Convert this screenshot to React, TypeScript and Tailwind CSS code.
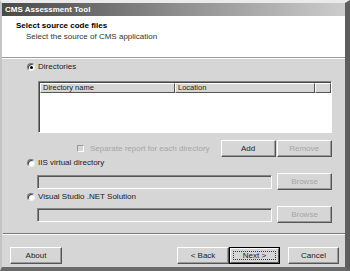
import React from "react";

const font = { fontFamily: '"Liberation Sans", Arial, sans-serif' };

function Radio({ checked, label }: { checked?: boolean; label: string }) {
  return (
    <div className="flex items-center h-[10px] ml-[25px]">
      <div className="w-[8px] h-[8px] rounded-full bg-white border border-t-[#7a7a7a] border-l-[#7a7a7a] border-r-[#f0f0f0] border-b-[#f0f0f0] shadow-[inset_1px_1px_0_#404040] flex items-center justify-center">
        {checked && <div className="w-[3px] h-[3px] rounded-full bg-black" />}
      </div>
      <span className="ml-[3px] text-[8px] leading-[10px] text-[#1a1a1a]">{label}</span>
    </div>
  );
}

function Button({
  label,
  w,
  disabled,
  focused,
  className = "",
}: {
  label: string;
  w: string;
  disabled?: boolean;
  focused?: boolean;
  className?: string;
}) {
  if (focused) {
    return (
      <div className={`${w} h-[17px] border border-black bg-[#d6d6d6] ${className}`}>
        <div className="w-full h-full border border-t-white border-l-white border-r-[#5a5a5a] border-b-[#5a5a5a] p-[2px]">
          <div className="w-full h-full border border-dotted border-[#3a3a3a] flex items-center justify-center text-[8px] text-[#222]">
            {label}
          </div>
        </div>
      </div>
    );
  }
  return (
    <div
      className={`${w} h-[17px] bg-[#d6d6d6] border border-t-white border-l-white border-r-[#555] border-b-[#555] shadow-[inset_-1px_-1px_0_#9a9a9a] flex items-center justify-center text-[8px] ${
        disabled ? "text-[#a6a6a6]" : "text-[#222]"
      } ${className}`}
    >
      {label}
    </div>
  );
}

function TextBox({ w }: { w: string }) {
  return (
    <div className={`${w} h-[14px] bg-[#d6d6d6] border border-t-[#858585] border-l-[#858585] border-r-white border-b-white shadow-[inset_1px_1px_0_#555]`} />
  );
}

export default function App() {
  return (
    <div className="w-[350px] h-[271px] bg-white" style={font}>
      <div className="w-full h-full flex flex-col bg-[#d6d6d6] border-t-[3px] border-l-[2px] border-r-[5px] border-b-[4px] border-t-[#ebebeb] border-l-[#c4c4c4] border-r-[#5e5e5e] border-b-[#6a6a6a]">
        {/* Title bar */}
        <div className="h-[13px] flex items-center pl-[3px] bg-gradient-to-r from-[#4a4a4a] via-[#8c8c8c] to-[#cdcdcd]">
          <span className="text-[8px] font-bold text-white leading-[10px]">CMS Assessment Tool</span>
        </div>
        {/* Header */}
        <div className="h-[41px] bg-white flex flex-col pt-[5px]">
          <div className="pl-[14px] text-[8px] font-bold text-black leading-[10px]">Select source code files</div>
          <div className="pl-[24px] text-[8px] text-[#333] leading-[10px] mt-[1px]">Select the source of CMS application</div>
        </div>
        <div className="h-[1px] bg-[#9a9a9a]" />
        <div className="h-[1px] bg-white" />
        {/* Body */}
        <div className="flex flex-col mt-[3px]">
          <Radio checked label="Directories" />
          {/* List view */}
          <div className="ml-[36px] mt-[9px] w-[294px] h-[52px] bg-white border border-t-[#858585] border-l-[#858585] border-r-white border-b-white shadow-[inset_1px_1px_0_#444] flex flex-col pl-[1px] pt-[1px]">
            <div className="flex h-[10px]">
              <div className="w-[135px] h-full bg-[#d6d6d6] border border-t-white border-l-white border-r-[#555] border-b-[#555] text-[7.5px] leading-[8px] pl-[2px] text-[#222]">Directory name</div>
              <div className="w-[140px] h-full bg-[#d6d6d6] border border-t-white border-l-white border-r-[#555] border-b-[#555] text-[7.5px] leading-[8px] pl-[2px] text-[#222]">Location</div>
              <div className="flex-1 h-full bg-[#d6d6d6] border border-t-white border-l-white border-r-[#555] border-b-[#555]" />
            </div>
          </div>
          {/* Checkbox + buttons */}
          <div className="flex items-center h-[17px] mt-[7px]">
            <div className="ml-[75px] w-[7px] h-[7px] border border-t-[#9a9a9a] border-l-[#9a9a9a] border-r-white border-b-white bg-[#d6d6d6]" />
            <span className="ml-[6px] text-[8px] text-[#a6a6a6]">Separate report for each directory</span>
            <Button label="Add" w="w-[55px]" className="ml-[11px]" />
            <Button label="Remove" w="w-[55px]" disabled className="ml-[1px]" />
          </div>
          <div className="mt-[1px]">
            <Radio label="IIS virtual directory" />
          </div>
          <div className="flex items-center h-[17px] mt-[5px]">
            <div className="ml-[35px]">
              <TextBox w="w-[235px]" />
            </div>
            <Button label="Browse" w="w-[55px]" disabled className="ml-[5px]" />
          </div>
          <div className="mt-[2px]">
            <Radio label="Visual Studio .NET Solution" />
          </div>
          <div className="flex items-center h-[17px] mt-[4px]">
            <div className="ml-[35px]">
              <TextBox w="w-[235px]" />
            </div>
            <Button label="Browse" w="w-[55px]" disabled className="ml-[5px]" />
          </div>
          {/* Separator */}
          <div className="mt-[10px] ml-[1px] h-[1px] bg-[#7a7a7a]" />
          <div className="ml-[1px] h-[1px] bg-white" />
          {/* Bottom buttons */}
          <div className="flex mt-[12px]">
            <Button label="About" w="w-[52px]" className="ml-[8px]" />
            <Button label="< Back" w="w-[52px]" className="ml-[115px]" />
            <Button label="Next >" w="w-[51px]" focused className="ml-[0px]" />
            <Button label="Cancel" w="w-[51px]" className="ml-[8px]" />
          </div>
        </div>
      </div>
    </div>
  );
}
